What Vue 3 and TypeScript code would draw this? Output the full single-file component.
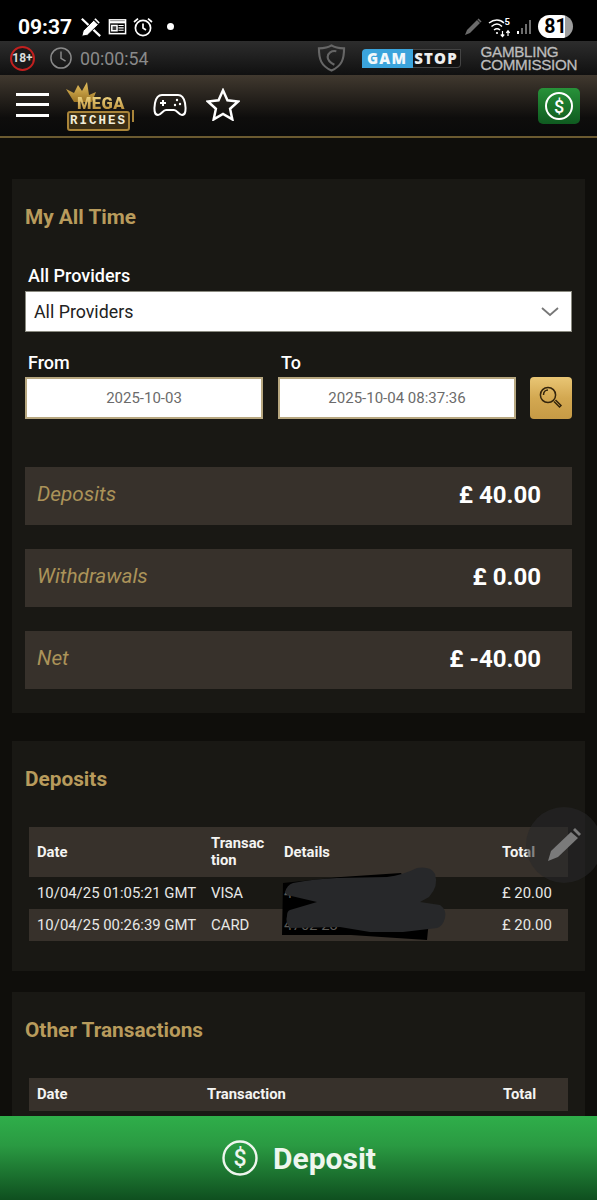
<template>
  <div class="page">
    <div class="status-bar">
      <div class="status-left">
        <span class="clock">09:37</span>
        <svg class="st-icon" width="22" height="22" viewBox="0 0 24 24" fill="none" stroke="#fff" stroke-width="2.400">
          <path d="M2 3l20 19" />
          <path d="M2 22l1.500-6L15 4.500l5 5L8 21z" fill="#fff" stroke="#000" stroke-width="1" />
          <path d="M17 2.500l4.500 4.500-1 1.500-5-5z" fill="#fff" stroke="none" />
        </svg>
        <svg class="st-icon" width="19" height="19" viewBox="0 0 20 20" fill="none" stroke="#fff" stroke-width="1.600">
          <rect x="1.500" y="3" width="17" height="14.500" />
          <path d="M1.500 5.500h17" stroke-width="2.400" />
          <path d="M4 9h5.500v5.500H4z" fill="#fff" fill-opacity="0.25" />
          <path d="M11 9h5.500M11 11.500h5.500M11 14h5.500" stroke-width="1.200" />
        </svg>
        <svg class="st-icon" width="20" height="20" viewBox="0 0 20 20" fill="none" stroke="#fff" stroke-width="1.700">
          <circle cx="10" cy="11" r="7.600" />
          <path d="M10 6.500V11l3 2" />
          <path d="M1 5l4-3.400M19 5l-4-3.400" />
        </svg>
        <span class="dot"></span>
      </div>
      <div class="status-right">
        <svg width="20" height="20" viewBox="0 0 20 20" fill="none" stroke="#6b6b6b">
          <path d="M2 18l2-5L14 3l3 3L7 16z" fill="#6b6b6b" stroke="none" />
          <path d="M15 2l3 3" stroke-width="1.600" />
        </svg>
        <svg width="24" height="22" viewBox="0 0 24 22" fill="none" stroke="#fff" stroke-width="1.500">
          <path d="M1 7c5-4 11-4 15 0M3.500 10.500c3.500-3 7.500-3 10.500 0M6 14c2-1.600 4-1.600 6 0" />
          <circle cx="9" cy="17" r="1.100" fill="#fff" stroke="none" />
          <path d="M14.500 15v5M12.800 18.500l1.700 2 1.700-2M20 20v-5M18.300 16.800l1.700-2 1.700 2" stroke-width="1.200" />
          <text x="16.500" y="9" fill="#fff" stroke="none" font-size="9.500" font-weight="700" font-family="Roboto, sans-serif">5</text>
        </svg>
        <svg width="16" height="18" viewBox="0 0 16 18" fill="#6d6d6d">
          <rect x="0" y="13" width="2" height="3" fill="#fff" />
          <rect x="4" y="10" width="2" height="6" />
          <rect x="8" y="6" width="2" height="10" />
          <rect x="12" y="2" width="2" height="14" />
        </svg>
        <span class="battery">81</span>
      </div>
    </div>

    <div class="compliance-bar">
      <span class="age">18+</span>
      <svg width="22" height="22" viewBox="0 0 24 24" fill="none" stroke="#8a8a8a" stroke-width="1.600">
        <circle cx="12" cy="12" r="11" />
        <path d="M12 5v7.500l5 3" />
      </svg>
      <span class="session">00:00:54</span>
      <svg class="shield" width="29" height="30" viewBox="0 0 30 30" fill="none" stroke="#666" stroke-width="2.200">
        <path d="M15 2c3 2 8 3 13 3 0 11-2 18-13 23C4 23 2 16 2 5c5 0 10-1 13-3z" />
        <path d="M20 8c-5-1-9 2-9 6s3 6 7 8" />
      </svg>
      <div class="gamstop"><span class="gam">GAM</span><span class="stop">STOP</span></div>
      <div class="commission">GAMBLING<br />COMMISSION</div>
    </div>

    <header class="top-nav">
      <div class="burger"><i></i><i></i><i></i></div>
      <div class="logo">
        <svg class="crown" width="32" height="20" viewBox="0 0 32 20">
          <defs>
            <linearGradient id="crownGold" x1="0" y1="0" x2="0" y2="1">
              <stop offset="0" stop-color="#e6c15f" />
              <stop offset="1" stop-color="#9c7424" />
            </linearGradient>
          </defs>
          <path d="M0 7l8 4 4-8 4 6 5-9 2 13 7-3-4 10H8z" fill="url(#crownGold)" />
        </svg>
        <span class="logo-mega">MEGA</span>
        <span class="logo-riches">RICHES</span>
      </div>
      <svg class="pad" width="34" height="26" viewBox="0 0 34 26" fill="none" stroke="#fff" stroke-width="2">
        <path d="M9 3h16c4 0 6 3 7 8 1 6 1 12-3 12-3 0-5-5-8-5h-8c-3 0-5 5-8 5-4 0-4-6-3-12 1-5 3-8 7-8z" />
        <path d="M7 11h6M10 8v6" />
        <circle cx="24" cy="8" r="1.200" fill="#fff" stroke="none" />
        <circle cx="27" cy="12" r="1.200" fill="#fff" stroke="none" />
        <circle cx="22" cy="13" r="1.200" fill="#fff" stroke="none" />
      </svg>
      <svg class="star" width="34" height="33" viewBox="0 0 36 34" fill="none" stroke="#fff" stroke-width="2.600" stroke-linejoin="miter">
        <path d="M18 2l4.700 10.600 11.300 1.200-8.500 7.700 2.400 11.300L18 27l-9.900 5.800 2.400-11.300L2 13.800l11.300-1.200z" />
      </svg>
      <div class="cash-btn">
        <svg width="30" height="30" viewBox="0 0 30 30" fill="none" stroke="#fff" stroke-width="2">
          <circle cx="15" cy="15" r="13" />
          <text x="15" y="21.500" text-anchor="middle" fill="#fff" stroke="none" font-size="18" font-weight="500" font-family="Roboto, sans-serif">$</text>
        </svg>
      </div>
    </header>

    <main class="content">
      <section class="panel summary">
        <h2>My All Time</h2>
        <label class="field-label">All Providers</label>
        <div class="select">
          <span>All Providers</span>
          <svg width="18" height="10" viewBox="0 0 18 10" fill="none" stroke="#777" stroke-width="1.800">
            <path d="M1 1l8 7 8-7" />
          </svg>
        </div>
        <div class="dates">
          <div class="date-col">
            <label class="field-label">From</label>
            <div class="date-input">2025-10-03</div>
          </div>
          <div class="date-col">
            <label class="field-label">To</label>
            <div class="date-input">2025-10-04 08:37:36</div>
          </div>
          <button class="search" type="button">
            <svg width="24" height="24" viewBox="0 0 24 24" fill="none" stroke="#33240c" stroke-width="1.500">
              <circle cx="9" cy="9" r="7.600" />
              <path d="M4.500 9c0-3 2-5 4.500-5" />
              <path d="M15 15.500l5.500 5.500 1.500-1.500-5.500-5.500" />
            </svg>
          </button>
        </div>
        <div class="stats">
          <div v-for="s in stats" :key="s.label" class="stat">
            <span class="stat-label">{{ s.label }}</span>
            <span class="stat-value">{{ s.value }}</span>
          </div>
        </div>
      </section>

      <section class="panel deposits">
        <h2>Deposits</h2>
        <div class="table dep-table">
          <div class="row head">
            <span>Date</span>
            <span>Transac<br />tion</span>
            <span>Details</span>
            <span>Total</span>
          </div>
          <div v-for="(r, i) in deposits" :key="r.date" class="row" :class="{ alt: i % 2 === 1 }">
            <span>{{ r.date }}</span>
            <span>{{ r.type }}</span>
            <span class="detail">{{ r.detail }}</span>
            <span>{{ r.total }}</span>
          </div>
          <!-- redaction: black marker under the text, grey scribble over it -->
          <svg class="redact-black" width="170" height="84" viewBox="0 0 170 84">
            <path d="M2 23l58-6 60-4 28 47-2 20-76-5-69 0z" fill="#000" />
          </svg>
          <svg class="redact-blob" width="170" height="84" viewBox="0 0 170 84">
            <path d="M4 32Q6 25 12 23Q32 19 56 18L106 17Q122 15 136 8Q150 6 154 14Q158 26 148 37L139 42L159 45Q166 50 164 58Q162 66 156 68L122 72L89 72L59 67L9 68Q4 62 6 56Q6 51 9 50L36 42L6 35z" fill="#27282a" />
          </svg>
        </div>
      </section>

      <section class="panel others">
        <h2>Other Transactions</h2>
        <div class="table">
          <div class="row head other-head">
            <span>Date</span>
            <span>Transaction</span>
            <span>Total</span>
          </div>
        </div>
      </section>
    </main>

    <div class="edit-fab">
      <svg width="36" height="36" viewBox="0 0 36 36" fill="#7a7a7a">
        <path d="M2 34l3-10L25 5l7 6-20 19z" />
        <path d="M27 3l2-2 6 6-2 2z" />
      </svg>
    </div>

    <div class="deposit-bar">
      <svg width="38" height="38" viewBox="0 0 38 38" fill="none" stroke="#eef6ee" stroke-width="2.400">
        <circle cx="19" cy="19" r="16.500" />
        <text x="19" y="27" text-anchor="middle" fill="#eef6ee" stroke="none" font-size="23" font-weight="500" font-family="Roboto, sans-serif">$</text>
      </svg>
      <span>Deposit</span>
    </div>
  </div>
</template>

<script setup lang="ts">
interface Stat {
  label: string;
  value: string;
}

interface DepositRow {
  date: string;
  type: string;
  detail: string;
  total: string;
}

const stats: Stat[] = [
  { label: 'Deposits', value: '£ 40.00' },
  { label: 'Withdrawals', value: '£ 0.00' },
  { label: 'Net', value: '£ -40.00' },
];

const deposits: DepositRow[] = [
  { date: '10/04/25 01:05:21 GMT', type: 'VISA', detail: '4', total: '£ 20.00' },
  { date: '10/04/25 00:26:39 GMT', type: 'CARD', detail: '4762 23', total: '£ 20.00' },
];
</script>

<style>
html,
body {
  margin: 0;
  background: #0f0e0b;
}
</style>

<style scoped>
.page {
  position: relative;
  width: 597px;
  height: 1200px;
  overflow: hidden;
  background: #0f0e0b;
  font-family: Roboto, "Liberation Sans", sans-serif;
  color: #fff;
}

.status-bar {
  height: 41px;
  background: #000;
  display: flex;
  align-items: center;
  justify-content: space-between;
  padding: 12px 24px 0 18px;
  box-sizing: border-box;
}

.status-left,
.status-right {
  display: flex;
  align-items: center;
}

.clock {
  font-size: 21px;
  font-weight: 700;
  margin-right: 8px;
}

.st-icon {
  margin-right: 6px;
}

.dot {
  width: 7px;
  height: 7px;
  border-radius: 50%;
  background: #fff;
  margin-left: 8px;
}

.status-right {
  gap: 5px;
}

.battery {
  width: 35px;
  height: 23px;
  border-radius: 12px;
  background: linear-gradient(90deg, #fff 78%, #9d9d9d 78%);
  color: #000;
  font-size: 19.500px;
  font-weight: 700;
  text-align: center;
  line-height: 23px;
}

.compliance-bar {
  height: 34px;
  background: linear-gradient(#2d2d2d, #101010);
  display: flex;
  align-items: center;
  padding-left: 10px;
}

.age {
  width: 21px;
  height: 21px;
  border: 2.500px solid #c1201f;
  border-radius: 50%;
  background: #1a1a1a;
  color: #ddd;
  font-size: 12px;
  font-weight: 700;
  line-height: 21px;
  text-align: center;
  margin-right: 15px;
}

.session {
  font-size: 17.800px;
  color: #8a8a8a;
  margin-left: 8px;
}

.shield {
  margin-left: 168px;
}

.gamstop {
  display: flex;
  margin-left: 16px;
  height: 19px;
  font-size: 15px;
  font-weight: 800;
  letter-spacing: 1.200px;
  line-height: 19px;
  font-family: "Open Sans", Roboto, sans-serif;
}

.gam {
  background: #3ba4dc;
  color: #f1f8fb;
  width: 51px;
  text-align: center;
  border-radius: 4px 0 0 0;
}

.stop {
  background: #111;
  color: #eee;
  width: 48px;
  text-align: center;
  border: 1px solid #444;
  border-left: none;
  border-radius: 0 0 4px 0;
  box-sizing: border-box;
  line-height: 17px;
}

.commission {
  margin-left: 20px;
  font-family: "Liberation Sans", sans-serif;
  font-size: 15.200px;
  line-height: 13px;
  color: #bcbcbc;
  letter-spacing: -0.300px;
  -webkit-text-stroke: 0.3px #bcbcbc;
}

.top-nav {
  height: 63px;
  box-sizing: border-box;
  background: linear-gradient(#41392f, #0e0d0c 70%, #0a0a0a);
  border-bottom: 2px solid #6b5a30;
  display: flex;
  align-items: center;
  padding: 0 0 2px 16px;
}

.burger {
  width: 33px;
  display: flex;
  flex-direction: column;
  gap: 7.500px;
}

.burger i {
  display: block;
  height: 3px;
  background: #fff;
}

.logo {
  position: relative;
  width: 70px;
  height: 49px;
  margin: 3px 0 0 17px;
  display: flex;
  flex-direction: column;
  align-items: flex-start;
  justify-content: flex-end;
}

.crown {
  position: absolute;
  left: 0;
  top: 0;
}

.logo-mega {
  position: relative;
  font-size: 16.500px;
  font-weight: 900;
  letter-spacing: 0.400px;
  line-height: 15px;
  margin-left: 11px;
  background: linear-gradient(#f0d684, #b78a35);
  -webkit-background-clip: text;
  background-clip: text;
  color: transparent;
}

.logo-riches {
  position: relative;
  width: 63px;
  height: 20px;
  margin-left: 1px;
  box-sizing: border-box;
  border: 2px solid #a98439;
  border-radius: 3px;
  background: #3a2d14;
  color: #f2ecd9;
  font-family: "Liberation Mono", monospace;
  font-size: 12.500px;
  font-weight: 700;
  letter-spacing: 2px;
  line-height: 16px;
  text-align: center;
}

.logo-riches::after {
  content: "";
  position: absolute;
  right: -6px;
  top: -3px;
  width: 2px;
  height: 12px;
  background: #a98439;
}

.pad {
  margin-left: 17px;
}

.star {
  margin-left: 19px;
}

.cash-btn {
  margin: 2px 17px 0 auto;
  width: 42px;
  height: 36px;
  border-radius: 5px;
  background: linear-gradient(#279239, #0f5a20);
  display: flex;
  align-items: center;
  justify-content: center;
}

.content {
  padding: 41px 12px 0;
  display: flex;
  flex-direction: column;
}

.panel {
  background: #191814;
  padding: 0 13px;
}

.panel h2 {
  margin: 0;
  font-size: 20.800px;
  font-weight: 700;
  color: #b89b5c;
  line-height: 24px;
}

.summary {
  height: 534px;
  padding-top: 26px;
  box-sizing: border-box;
}

.field-label {
  display: block;
  font-size: 18px;
  font-weight: 500;
  color: #fff;
  line-height: 20px;
  padding-left: 3px;
}

.summary h2 {
  margin-bottom: 37px;
}

.select {
  margin-top: 5px;
  height: 41px;
  box-sizing: border-box;
  background: #fff;
  border: 1px solid #8a8a80;
  color: #222;
  font-size: 17.800px;
  display: flex;
  align-items: center;
  justify-content: space-between;
  padding: 0 12px 0 8px;
}

.dates {
  display: flex;
  align-items: flex-end;
  margin-top: 21px;
}

.date-col {
  width: 238px;
  margin-right: 14px;
}

.date-col:first-child {
  margin-right: 15px;
}

.date-col .field-label {
  margin-bottom: 4px;
}

.date-input {
  height: 42px;
  box-sizing: border-box;
  background: #fff;
  border: 2px solid #b7a780;
  color: #6b6b6b;
  font-size: 15px;
  line-height: 38px;
  text-align: center;
}

.search {
  width: 42px;
  height: 42px;
  padding: 0;
  border: none;
  border-radius: 4px;
  background: linear-gradient(#e9c675, #d3a851 50%, #c69a45);
  display: flex;
  align-items: center;
  justify-content: center;
}

.stats {
  margin-top: 48px;
  display: flex;
  flex-direction: column;
  gap: 24px;
}

.stat {
  height: 58px;
  background: #37312b;
  display: flex;
  align-items: center;
  justify-content: space-between;
  padding: 0 31px 0 12px;
}

.stat-label {
  font-size: 20.800px;
  font-style: italic;
  color: #ab9359;
  margin-top: -4px;
}

.stat-value {
  font-size: 24px;
  font-weight: 700;
  margin-top: -2px;
}

.deposits {
  margin-top: 28px;
  height: 230px;
  padding-top: 26px;
  box-sizing: border-box;
}

.others {
  margin-top: 21px;
  height: 300px;
  padding-top: 26px;
  box-sizing: border-box;
}

.table {
  position: relative;
  margin: 36px 4px 0;
  font-size: 14.900px;
}

.row {
  display: grid;
  grid-template-columns: 174px 73px 218px 1fr;
  height: 32px;
  align-items: center;
  padding-left: 8px;
  color: #e8e8e6;
}

.row.alt {
  background: #37312b;
}

.row.head {
  height: 50px;
  background: #37312b;
  color: #f4f4f2;
  font-weight: 700;
  font-size: 14.800px;
  line-height: 17px;
}

.row.head.other-head {
  height: 33px;
  grid-template-columns: 170px 296px 1fr;
}

.detail {
  position: relative;
  z-index: 1;
  color: #5c5a56;
}

.redact-black,
.redact-blob {
  position: absolute;
  left: 252px;
  top: 33px;
}

.redact-black {
  z-index: 0;
}

.redact-blob {
  z-index: 2;
}

.edit-fab {
  position: absolute;
  left: 526px;
  top: 807px;
  width: 76px;
  height: 76px;
  border-radius: 50%;
  background: rgba(40, 40, 42, 0.55);
  display: flex;
  align-items: center;
  justify-content: flex-start;
  padding-left: 20px;
  box-sizing: border-box;
}

.deposit-bar {
  position: absolute;
  left: 0;
  right: 0;
  bottom: 0;
  height: 84px;
  background: linear-gradient(#2fae4a, #2a9a42 35%, #0f4f1f);
  display: flex;
  align-items: center;
  justify-content: center;
  gap: 14px;
  font-size: 30px;
  font-weight: 700;
  color: #eef6ee;
}
</style>
